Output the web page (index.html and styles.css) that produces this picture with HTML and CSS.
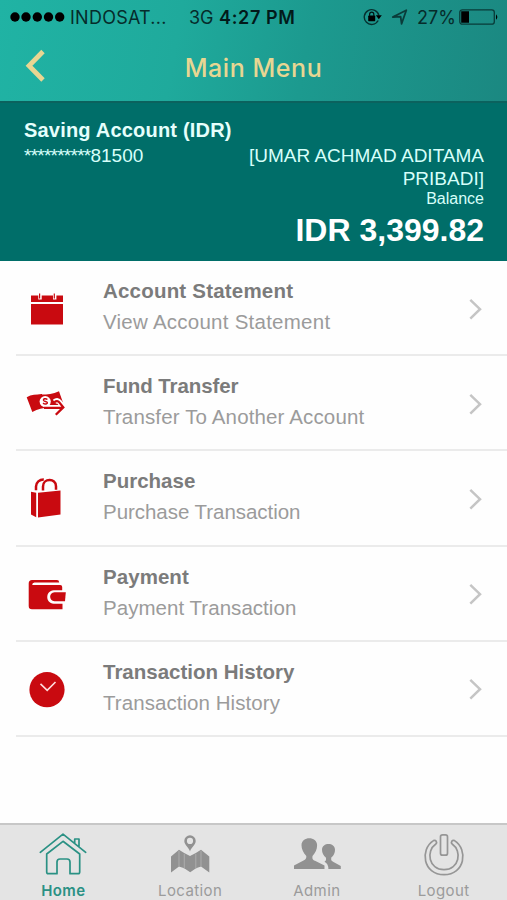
FILE: index.html
```html
<!DOCTYPE html>
<html lang="en">
<head>
<meta charset="utf-8">
<title>Main Menu</title>
<link rel="stylesheet" href="styles.css">
</head>
<body>
<div class="screen">
  <header class="top">
    <div class="status">
      <svg class="signal" width="55" height="12" viewBox="0 0 55 12"><circle cx="5" cy="6" r="4.7"/><circle cx="16" cy="6" r="4.7"/><circle cx="27.3" cy="6" r="4.7"/><circle cx="38.5" cy="6" r="4.7"/><circle cx="49.7" cy="6" r="4.7"/></svg>
      <span class="carrier">INDOSAT...</span>
      <span class="network">3G</span>
      <span class="time">4:27 PM</span>
      <svg class="lock" width="19" height="18" viewBox="0 0 19 18"><path d="M15.2 12.5A7.4 7.4 0 1 1 15.9 7.5" fill="none" stroke="#06302f" stroke-width="1.4"/><path d="M12.8 7.3h6l-3 3.9z"/><rect x="5.2" y="7.6" width="7" height="5.6" rx=".6"/><path d="M6.6 8V6.2a2.1 2.1 0 0 1 4.2 0V8" fill="none" stroke="#021616" stroke-width="1.2"/></svg>
      <svg class="arrow" width="17" height="17" viewBox="0 0 17 17"><path d="M1.8 8 15.3 1.2 10.6 14.8 9.6 7.600z" fill="none" stroke="#0a3c3a" stroke-width="1.8" stroke-linejoin="round"/></svg>
      <span class="percent">27%</span>
      <svg class="battery" width="40" height="17" viewBox="0 0 40 17"><rect x=".8" y=".8" width="34.5" height="14.4" rx="2.5" fill="none" stroke="#093b39" stroke-width="1.3"/><path d="M2.2 2.2h7.8v11.6H2.2zM37 5.2q2.7 2.8 0 5.6z"/></svg>
    </div>
    <div class="nav">
      <svg class="back" width="22" height="34" viewBox="0 0 22 34"><path d="M19 2.500 5 16.800 19 31" fill="none" stroke="#e8d692" stroke-width="4.800"/></svg>
      <h1 class="title">Main Menu</h1>
    </div>
  </header>
  <section class="account">
    <h2 class="account-name">Saving Account (IDR)</h2>
    <div class="account-row">
      <span class="number"><span class="mask">**********</span>81500</span>
      <span class="owner">[UMAR ACHMAD ADITAMA<br>PRIBADI]</span>
    </div>
    <div class="balance-label">Balance</div>
    <div class="balance">IDR 3,399.82</div>
  </section>
  <main class="list">
    <div class="row">
      <svg class="icon" width="44" height="44" viewBox="0 0 44 44" fill="#c90a10"><path d="M8 7.500h32v6.500H8zM8 16h32v20.500H8z"/><path d="M17 5v6.500M31.700 5v6.500" stroke="#fff" stroke-width="3.400"/><path d="M16.600 5.500v5M31.300 5.500v5" stroke="#c90a10" stroke-width="1.200"/></svg>
      <div class="labels"><div class="name n1">Account Statement</div><div class="desc d1">View Account Statement</div></div>
      <svg class="chev" width="16" height="22" viewBox="0 0 16 22"><path d="M2.3 1.8 12 11.2 2.3 20.6"/></svg>
    </div>
    <div class="row">
      <svg class="icon" width="44" height="44" viewBox="0 0 44 44" fill="#c90a10"><path d="M3.700 14.200C13 8.800 24 14.600 36 8.300l4.800 13.700c-11 4.600-20 .2-31.500 7.100z"/><circle cx="22.200" cy="18.600" r="5.600" fill="#fff"/><path d="M24.400 16.500c-1.800-1.600-4.400-.7-3.800 1 .5 1.300 3.500.5 3.700 2 .2 1.800-2.800 2.100-4.200.4" fill="none" stroke="#c90a10" stroke-width="1.500"/><path d="M21 24.500h17M31.500 18.700q2.800-2.400 4.800.2l4 5-7.300 7.300" fill="none" stroke="#fff" stroke-width="5.200"/><path d="M21 24.800h19M31.500 19.200q2.800-2.400 4.800.2l4 5-7.500 7.300" fill="none" stroke="#c90a10" stroke-width="2.300"/></svg>
      <div class="labels"><div class="name n2">Fund Transfer</div><div class="desc d2">Transfer To Another Account</div></div>
      <svg class="chev" width="16" height="22" viewBox="0 0 16 22"><path d="M2.3 1.8 12 11.2 2.3 20.6"/></svg>
    </div>
    <div class="row">
      <svg class="icon" width="44" height="44" viewBox="0 0 44 44" fill="#c90a10"><path d="m8 13.7 5.2 1v24.5L8 36.5zM15 14.8l22.500-2.300v24.100l-22.500 2.800z"/><path d="M13 12.2V8.5c.1-4 3.5-7.2 7.8-7.1M20 12.500V8.400c0-8.200 13-8.700 13-.2v3.500" fill="none" stroke="#c90a10" stroke-width="2.500"/></svg>
      <div class="labels"><div class="name n3">Purchase</div><div class="desc d3">Purchase Transaction</div></div>
      <svg class="chev" width="16" height="22" viewBox="0 0 16 22"><path d="M2.3 1.8 12 11.2 2.3 20.6"/></svg>
    </div>
    <div class="row">
      <svg class="icon" width="44" height="44" viewBox="0 0 44 44" fill="#c90a10"><path d="M9 7h25q2 0 2.200 2.400H11.500q-2.300.3-2.300 2.600h28q2 0 2 2v3.200h-8.500c-8.600.5-8.500 13 0 13.500h8.800v5.500H9q-3.300 0-3.300-3.300V10.500Q5.700 7 9 7z"/><path d="M31.500 19.300h11.300l-.8 8.900H31.500c-5.800 0-5.800-8.900 0-8.900z"/></svg>
      <div class="labels"><div class="name n4">Payment</div><div class="desc d4">Payment Transaction</div></div>
      <svg class="chev" width="16" height="22" viewBox="0 0 16 22"><path d="M2.3 1.8 12 11.2 2.3 20.6"/></svg>
    </div>
    <div class="row">
      <svg class="icon" width="44" height="44" viewBox="0 0 44 44"><circle cx="24" cy="21.700" r="17.600" fill="#c90a10"/><path d="m17.500 15.900 6.700 6.500 8.300-8.400" fill="none" stroke="#ffdcdc" stroke-width="1.600"/></svg>
      <div class="labels"><div class="name n5">Transaction History</div><div class="desc d5">Transaction History</div></div>
      <svg class="chev" width="16" height="22" viewBox="0 0 16 22"><path d="M2.3 1.8 12 11.2 2.3 20.6"/></svg>
    </div>
  </main>
  <footer class="tabs">
    <div class="tab active">
      <svg width="50" height="46" viewBox="0 0 50 46" fill="none" stroke="#2a9184" stroke-width="1.700" stroke-linejoin="round" stroke-linecap="round"><path d="M2.300 21.300 25 3.200 47.700 21.300M8.700 23 25 10.300 41.700 23v18q0 1.700-1.700 1.700h-8V31q0-3-3-3h-7q-3 0-3 3v11.700h-8.600q-1.700 0-1.700-1.700zM36.700 12V8h4.300v8"/></svg>
      <span>Home</span>
    </div>
    <div class="tab">
      <svg width="50" height="46" viewBox="0 0 50 46" fill="#919191"><path d="M25 20.500c-1-4-5.700-6.300-5.700-10.500a5.700 5.700 0 0 1 11.400 0c0 4.200-4.700 6.500-5.700 10.500zM25 6.800a3.100 3.100 0 1 0 0 6.200 3.100 3.100 0 0 0 0-6.200z" fill-rule="evenodd"/><path d="m6 25.500 8-6.700 5.200 3.300 5.800 3 5.800-3 5.200-3.300 8.300 6.700v16L36 35.600l-5 1.700-5.800 4-6-4-5.200-1.700-8 5.900z"/><path d="M14 19.800v15.700M19.300 23v14.500M30.800 23v14.500M36 19.800v15.700" stroke="#aaa" stroke-width="1.100"/></svg>
      <span>Location</span>
    </div>
    <div class="tab">
      <svg width="50" height="46" viewBox="0 0 50 46" fill="#919191"><path d="M2 38v-3.600l10-5.200q2.700-1.400 2.300-4.300c-3-3-4.800-7-4.800-10.700 0-9.300 15.600-9.300 15.600 0 0 4-1.700 7.700-4.600 10.700-.3 2.900 0 3.700 2.500 4.800l9.500 4.700V38z"/><path d="M36.400 38h12.400v-3l-7.300-4c-2.300-1.200-2.500-1.700-2.200-4.400 2.500-2.200 3.700-5 3.700-7.900 0-7.700-13-7.700-13 0 0 3.100 1.400 5.600 4 8 .2 2.800-.2 3-1.500 4q3.900 2 3.900 7.300z"/></svg>
      <span>Admin</span>
    </div>
    <div class="tab">
      <svg width="50" height="46" viewBox="0 0 50 46" fill="none" stroke="#969696" stroke-width="1.700" stroke-linejoin="round"><path d="M14.500 9.600C.5 18.500 4 43.600 25 43.600S49.500 18.500 35.500 9.600q-1.700-.8-2.700.7t.4 2.700c10.200 7.200 7.100 25.700-8.200 25.700S6.600 20.200 16.800 13q1.400-1.200.4-2.700t-2.700-.7z"/><rect x="21.500" y="3.800" width="7" height="20.400" rx="2"/></svg>
      <span>Logout</span>
    </div>
  </footer>
</div>
</body>
</html>
```
FILE: styles.css
```css
* { box-sizing: border-box; }
body { margin: 0; font-family: "Liberation Sans", Arial, sans-serif; background: #fefefe; }
.screen { width: 507px; height: 900px; display: flex; flex-direction: column; overflow: hidden; background: #fefefe; }
h1, h2 { margin: 0; }
svg { display: block; flex: none; }

.top { height: 103px; background: linear-gradient(100deg, #20b3a4 0%, #1faa9c 35%, #1c9a8f 60%, #1b8881 100%); border-bottom: 2px solid #0b625e; }
.status { height: 34px; display: flex; align-items: center; padding-left: 10px; font-family: Inter, "Liberation Sans", sans-serif; font-size: 18px; color: #062c2b; white-space: nowrap; }
.carrier { width: 98px; margin-left: 5px; letter-spacing: .25px; }
.network { width: 30px; margin-left: 21px; }
.time { width: 78px; font-weight: 600; letter-spacing: .65px; color: #021a1a; }
.lock { margin-left: 66px; }
.arrow { margin-left: 9px; }
.percent { width: 41px; margin-left: 9px; }
.battery { margin-left: 1px; }
.nav { height: 67px; display: grid; grid-template-columns: 80px 1fr 80px; align-items: center; }
.back { margin-left: 24px; margin-top: -3px; }
.title { font-family: Inter, "Liberation Sans", sans-serif; font-size: 25px; line-height: 30px; font-weight: 500; color: #e8d692; text-align: center; letter-spacing: .55px; }

.account { height: 158px; padding: 15px 23px 0 24px; background: #006e69; color: #d7fffa; }
.account-name { font-size: 20px; line-height: 24px; letter-spacing: .2px; color: #e6fffc; }
.account-row { display: flex; justify-content: space-between; font-size: 19px; line-height: 23px; margin-top: 2px; }
.mask { letter-spacing: -.75px; }
.owner { text-align: right; }
.balance-label { text-align: right; font-size: 16px; line-height: 18px; }
.balance { text-align: right; font-size: 32px; line-height: 44px; font-weight: 700; color: #fff; }

.list { flex: 1; padding: 0 0 0 16px; }
.row { height: 95.2px; display: flex; align-items: center; border-bottom: 2px solid #ebebeb; padding: 2px 23px 0 7px; }
.icon { margin-top: 2px; }
.labels { flex: 1; margin: -5px 0 0 36px; white-space: nowrap; }
.name { font-size: 20.5px; line-height: 31px; font-weight: 700; color: #7b7b7b; }
.desc { font-size: 20.5px; line-height: 31px; color: #9b9b9b; }
.n1 { letter-spacing: .2px; }
.n2 { letter-spacing: -.1px; }
.n4 { letter-spacing: .05px; }
.d1 { letter-spacing: .25px; }
.d2 { letter-spacing: .14px; }
.d3 { letter-spacing: -.04px; }
.d4 { letter-spacing: .04px; }
.d5 { letter-spacing: .06px; }
.chev path { fill: none; stroke: #c5c5c5; stroke-width: 2.5px; }

.tabs { height: 77px; display: grid; grid-template-columns: repeat(4, 1fr); background: #e4e4e4; border-top: 2px solid #c7c7c7; }
.tab { display: flex; flex-direction: column; align-items: center; padding-top: 6px; font-family: Inter, "Liberation Sans", sans-serif; font-size: 15px; line-height: 27px; color: #9b9b9b; letter-spacing: .4px; }
.active { color: #2a9184; font-weight: 600; }
```
